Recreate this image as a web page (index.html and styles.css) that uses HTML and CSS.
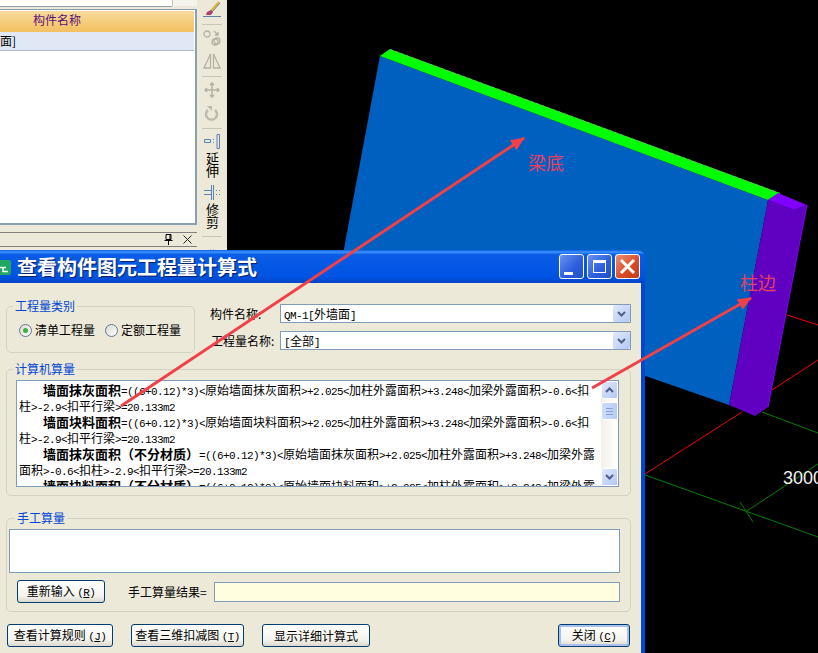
FILE: index.html

```html
<!DOCTYPE html>
<html lang="zh-CN">
<head>
  <meta charset="UTF-8">
  <title>查看构件图元工程量计算式</title>
  <link rel="stylesheet" href="styles.css">
</head>
<body>
<div class="desktop">

  <!-- 3D view behind the windows -->
  <svg class="canvas-layer" width="818" height="653" viewBox="0 0 818 653">
    <g fill="none" stroke-width="1">
      <path stroke="#f00000" d="M645 474 742 412M772 390 818 360M787 315 818 325"/>
      <path stroke="#008000" d="M645 475 818 537M762 412 818 433M747 511 818 464M740 502 753 522"/>
    </g>
    <polygon fill="#0060c0" points="380,56 768,200 729,405 340,270"/>
    <polygon fill="#00ff00" points="380,56 390,49 780,193 768,200"/>
    <path stroke="#80a880" stroke-dasharray="3 3" fill="none" d="M390 49.500 780 193.500"/>
    <polygon fill="#6000c0" points="768,200 794,210 807,205 768,407 755,416 729,405"/>
    <polygon fill="#8000ff" points="768,200 778,193 807,205 794,210"/>
    <path stroke="#8000ff" fill="none" d="M807 205 768 407"/>
    <text class="dim-text" x="783" y="484">3000</text>
  </svg>

  <!-- part list and drawing toolbar -->
  <aside class="side-panel">
    <div class="side-main">
      <div class="side-top">
        <div class="side-input"></div>
        <div class="side-top-btn"></div>
      </div>
      <div class="list-box">
        <div class="list-head">构件名称</div>
        <div class="list-row">面]</div>
      </div>
      <div class="pane-bar">
        <svg width="9" height="11" viewBox="0 0 9 11"><path fill="none" stroke="#000" d="M2 .5h5v5H2zM.5 6.500h8M4.500 6.500V11M6 1v4"/></svg>
        <svg width="9" height="9" viewBox="0 0 9 9"><path fill="none" stroke="#222" d="M.5.5l8 8M8.500.5l-8 8"/></svg>
      </div>
    </div>
    <div class="toolbar">
      <svg class="tool tool-first" width="18" height="16" viewBox="0 0 18 16">
        <path fill="none" stroke="#e0b030" stroke-width="2" d="M16 1 8 10"/>
        <path fill="none" stroke="#5a78b0" d="M17 2 9 11"/>
        <path fill="#b04070" d="M4 11l4-2 2 2-2 3H3z"/>
        <path stroke="#6080a8" d="M0 15.500h18"/>
      </svg>
      <div class="tb-sep"></div>
      <svg class="tool tool-near" width="18" height="16" viewBox="0 0 18 16">
        <g fill="none" stroke="#b4b2a4" stroke-width="1.300">
          <circle cx="4" cy="4" r="3"/><circle cx="12" cy="12" r="3"/><circle cx="14" cy="11" r="3"/>
          <path d="M11 1l4 4M15 2v3h-3"/>
        </g>
      </svg>
      <svg class="tool" width="18" height="16" viewBox="0 0 18 16">
        <path fill="none" stroke="#b4b2a4" stroke-width="1.300" d="M7.500 1v14H1zM10.500 1v14H17z"/>
      </svg>
      <div class="tb-sep"></div>
      <svg class="tool tool-near" width="16" height="16" viewBox="0 0 16 16">
        <path fill="none" stroke="#b4b2a4" stroke-width="1.500" d="M8 1v14M1 8h14M6 3l2-2 2 2M6 13l2 2 2-2M3 6 1 8l2 2M13 6l2 2-2 2"/>
      </svg>
      <svg class="tool" width="14" height="16" viewBox="0 0 14 16">
        <path fill="none" stroke="#bdbbad" stroke-width="2.500" d="M3 5a5.500 5.500 0 1 0 7 0"/>
        <path fill="#bdbbad" d="M2 1h5v5z"/>
      </svg>
      <div class="tb-sep"></div>
      <svg class="tool tool-near" width="16" height="15" viewBox="0 0 16 15">
        <path fill="none" stroke="#5a80b8" d="M.5 5.500h6v3h-6zM13 .5h2.500v14H13zM9 5.500h1M9 8.500h1"/>
      </svg>
      <div class="tool-text">延伸</div>
      <svg class="tool" width="16" height="15" viewBox="0 0 16 15">
        <path fill="none" stroke="#5a80b8" d="M0 5.500h7M0 9.500h7M7.500 0v15M9.500 0v15M12 5.500h1M12 9.500h1M15 5.500h1M15 9.500h1"/>
      </svg>
      <div class="tool-text">修剪</div>
      <div class="tb-sep"></div>
      <svg class="tool" width="16" height="8" viewBox="0 0 16 8">
        <path fill="none" stroke="#7090c0" stroke-width="1.500" d="M7 1 2 4l5 3M9 1l5 3-5 3M2 4h4M10 4h4"/>
      </svg>
    </div>
  </aside>

  <!-- dialog -->
  <section class="dialog">
    <header class="title-bar">
      <svg class="app-icon" width="11" height="15" viewBox="0 0 11 15">
        <rect x="-6" width="17" height="15" rx="2" fill="#20a860"/>
        <path fill="none" stroke="#fff" stroke-width="1.500" d="M0 7.500h6M3 7.500v4h5"/>
      </svg>
      <h1 class="title-text">查看构件图元工程量计算式</h1>
      <div class="win-btns">
        <div class="win-btn"><span class="ico-min"></span></div>
        <div class="win-btn"><span class="ico-max"></span></div>
        <div class="win-btn win-close">
          <svg width="17" height="17" viewBox="0 0 17 17"><path fill="none" stroke="#fff" stroke-width="3" d="M2 2l13 13M15 2 2 15"/></svg>
        </div>
      </div>
    </header>

    <div class="dialog-body">
      <div class="top-row">
        <fieldset class="group type-group">
          <legend>工程量类别</legend>
          <div class="radios">
            <span class="radio-item"><span class="radio radio-on"></span>清单工程量</span>
            <span class="radio-item"><span class="radio"></span>定额工程量</span>
          </div>
        </fieldset>
        <div class="combo-form">
          <span>构件名称:</span>
          <div class="combo"><span class="n">QM-1[</span>外墙面<span class="n">]</span>
            <span class="combo-btn"><svg class="chev"><use href="#chev-down"/></svg></span>
          </div>
          <span class="second-label">工程量名称:</span>
          <div class="combo"><span class="n">[</span>全部<span class="n">]</span>
            <span class="combo-btn"><svg class="chev"><use href="#chev-down"/></svg></span>
          </div>
        </div>
      </div>

      <fieldset class="group calc-group">
        <legend>计算机算量</legend>
        <div class="formula-box">
          <div class="formula-text">
            <div class="line-first"><b>墙面抹灰面积</b><span class="n">=((6+0.12)*3)&lt;</span>原始墙面抹灰面积<span class="n">&gt;+2.025&lt;</span>加柱外露面积<span class="n">&gt;+3.248&lt;</span>加梁外露面积<span class="n">&gt;-0.6&lt;</span>扣</div>
            <div>柱<span class="n">&gt;-2.9&lt;</span>扣平行梁<span class="n">&gt;=20.133m2</span></div>
            <div class="line-first"><b>墙面块料面积</b><span class="n">=((6+0.12)*3)&lt;</span>原始墙面块料面积<span class="n">&gt;+2.025&lt;</span>加柱外露面积<span class="n">&gt;+3.248&lt;</span>加梁外露面积<span class="n">&gt;-0.6&lt;</span>扣</div>
            <div>柱<span class="n">&gt;-2.9&lt;</span>扣平行梁<span class="n">&gt;=20.133m2</span></div>
            <div class="line-first"><b>墙面抹灰面积（不分材质）</b><span class="n">=((6+0.12)*3)&lt;</span>原始墙面抹灰面积<span class="n">&gt;+2.025&lt;</span>加柱外露面积<span class="n">&gt;+3.248&lt;</span>加梁外露</div>
            <div>面积<span class="n">&gt;-0.6&lt;</span>扣柱<span class="n">&gt;-2.9&lt;</span>扣平行梁<span class="n">&gt;=20.133m2</span></div>
            <div class="line-first"><b>墙面块料面积（不分材质）</b><span class="n">=((6+0.12)*3)&lt;</span>原始墙面块料面积<span class="n">&gt;+2.025&lt;</span>加柱外露面积<span class="n">&gt;+3.248&lt;</span>加梁外露</div>
          </div>
          <div class="scrollbar">
            <span class="sb-btn"><svg class="chev"><use href="#chev-up"/></svg></span>
            <span class="sb-thumb"></span>
            <span class="sb-btn sb-down"><svg class="chev"><use href="#chev-down"/></svg></span>
          </div>
        </div>
      </fieldset>

      <fieldset class="group manual-group">
        <legend>手工算量</legend>
        <div class="manual-input"></div>
        <div class="manual-row">
          <button class="xp-btn btn-retype">重新输入 <span class="n">(<u>R</u>)</span></button>
          <span class="result-label">手工算量结果=</span>
          <div class="result-box"></div>
        </div>
      </fieldset>

      <div class="bottom-row">
        <button class="xp-btn btn-rule">查看计算规则 <span class="n">(<u>J</u>)</span></button>
        <button class="xp-btn btn-3d">查看三维扣减图 <span class="n">(<u>T</u>)</span></button>
        <button class="xp-btn btn-detail">显示详细计算式</button>
        <button class="xp-btn btn-close">关闭 <span class="n">(<u>C</u>)</span></button>
      </div>
    </div>
  </section>

  <!-- red notes drawn over the screenshot -->
  <svg class="canvas-layer" width="818" height="653" viewBox="0 0 818 653">
    <defs>
      <marker id="head" markerUnits="userSpaceOnUse" markerWidth="14" markerHeight="12" refX="13" refY="6" orient="auto">
        <path fill="#f04048" d="M0 0 14 6 0 12z"/>
      </marker>
      <symbol id="chev-down" viewBox="0 0 9 6"><path fill="none" stroke="#4d6185" stroke-width="2" d="M1 1l3.500 3.500L8 1"/></symbol>
      <symbol id="chev-up" viewBox="0 0 9 6"><path fill="none" stroke="#4d6185" stroke-width="2" d="M1 5l3.500-3.500L8 5"/></symbol>
    </defs>
    <path fill="none" stroke="#f04048" stroke-width="3" marker-end="url(#head)" d="M121 406 524 138"/>
    <path fill="none" stroke="#f04048" stroke-width="3" marker-end="url(#head)" d="M592 388 751 298"/>
  </svg>
  <span class="note note-beam">梁底</span>
  <span class="note note-col">柱边</span>
</div>
</body>
</html>
```

FILE: styles.css

```css
html, body {
  margin: 0;
  padding: 0;
  background: #000;
}

body {
  font-family: "Noto Sans CJK SC", "Liberation Sans", sans-serif;
  font-size: 12px;
  line-height: 14px;
  color: #000;
}

.desktop {
  position: relative;
  width: 818px;
  height: 653px;
  overflow: hidden;
  background: #000;
}

.canvas-layer {
  position: absolute;
  left: 0;
  top: 0;
  pointer-events: none;
}

.dim-text {
  font-family: "Liberation Sans", sans-serif;
  font-size: 18px;
  fill: #f0f0f0;
}

.n {
  font-family: "Liberation Mono", monospace;
  font-size: 11px;
  letter-spacing: -0.6px;
}

/* side panel */
.side-panel {
  position: absolute;
  left: 0;
  top: 0;
  width: 227px;
  height: 250px;
  display: flex;
  background: #ece9d8;
  overflow: hidden;
}

.side-main {
  width: 197px;
  flex: none;
}

.side-top {
  display: flex;
  height: 8px;
}

.side-input {
  width: 172px;
  height: 6px;
  background: #fff;
  border-bottom: 1px solid #8ca0b4;
}

.side-top-btn {
  width: 24px;
  height: 6px;
  background: #f4f3ec;
  border-left: 1px solid #c8c6b8;
}

.list-box {
  height: 216px;
  background: #fff;
  border: 1px solid #8ca0b4;
  border-width: 1px 2px 2px 0;
  padding-top: 1px;
  box-sizing: border-box;
  margin-top: 1px;
}

.list-head {
  height: 21px;
  line-height: 18px;
  padding-left: 33px;
  margin-right: 1px;
  color: #5b0f7b;
  background: linear-gradient(#f8dc9c, #f2c060);
}

.list-row {
  height: 18px;
  line-height: 18px;
  margin-right: 1px;
  background: #dfe8f4;
  border-bottom: 1px solid #b4b8c0;
}

.pane-bar {
  display: flex;
  justify-content: flex-end;
  align-items: center;
  gap: 10px;
  height: 13px;
  margin-top: 7px;
  padding-right: 5px;
  border-top: 1px solid #808080;
  border-bottom: 1px solid #808080;
}

.toolbar {
  width: 24px;
  margin-left: 3px;
  padding-top: 1px;
  display: flex;
  flex-direction: column;
  align-items: center;
}

.tool {
  flex: none;
  margin-top: 7px;
}

.tool-first {
  margin-top: 0;
}

.tool-near {
  margin-top: 0;
}

.tb-sep {
  flex: none;
  width: 20px;
  height: 1px;
  margin: 7px 0 5px;
  background: #c8c6b6;
}

.tool-text {
  flex: none;
  margin-top: 3px;
  height: 26px;
  font-size: 13px;
  line-height: 14px;
  writing-mode: vertical-rl;
  text-orientation: upright;
}

/* dialog */
.dialog {
  position: absolute;
  left: 0;
  top: 250px;
  width: 645px;
  height: 403px;
  display: flex;
  flex-direction: column;
}

.title-bar {
  flex: none;
  height: 33px;
  display: flex;
  align-items: center;
  border-top-right-radius: 8px;
  background: linear-gradient(#0a5ae8, #3d94ff 6%, #0a5ce6 14%, #0054e3 80%, #0044c8);
}

.app-icon {
  flex: none;
  margin-top: 1px;
}

.title-text {
  margin: 0 0 0 6px;
  font-size: 20px;
  line-height: 24px;
  font-weight: 700;
  color: #fff;
  text-shadow: 1px 1px 1px #0a1f60;
}

.win-btns {
  display: flex;
  gap: 3px;
  margin-left: auto;
  margin-right: 5px;
}

.win-btn {
  width: 23px;
  height: 23px;
  display: flex;
  align-items: center;
  justify-content: center;
  border: 1px solid #fff;
  border-radius: 3px;
  background: linear-gradient(135deg, #6a92ee, #2a5cdc 60%, #2450c8);
}

.win-close {
  background: linear-gradient(135deg, #ea9078, #d84a24 60%, #c03c18);
}

.ico-min {
  width: 9px;
  height: 3px;
  margin: 13px 6px 0 0;
  background: #fff;
}

.ico-max {
  width: 11px;
  height: 9px;
  border: 1px solid #fff;
  border-top-width: 3px;
}

.dialog-body {
  flex: 1;
  background: #ece9d8;
  border-right: 4px solid #0047d6;
  padding: 16px 10px 0 6px;
}

.group {
  margin: 0;
  padding: 0;
  min-width: 0;
  border: 1px solid #d4d2c2;
  border-radius: 5px;
}

.group legend {
  margin-left: 6px;
  padding: 0 2px;
  line-height: 14px;
  color: #0046d5;
}

.top-row {
  display: flex;
  align-items: flex-start;
  gap: 15px;
}

.type-group {
  width: 189px;
  height: 54px;
  box-sizing: border-box;
  flex: none;
}

.radios {
  display: flex;
  gap: 10px;
  padding: 10px 0 0 12px;
}

.radio-item {
  display: flex;
  align-items: center;
  gap: 3px;
}

.radio {
  width: 11px;
  height: 11px;
  border: 1px solid #5c7a98;
  border-radius: 50%;
  background: linear-gradient(135deg, #dcd9cc, #fff);
  display: flex;
  align-items: center;
  justify-content: center;
}

.radio-on::after {
  content: "";
  width: 5px;
  height: 5px;
  border-radius: 50%;
  background: #3cb03c;
}

.combo-form {
  margin-top: 5px;
  width: 421px;
  display: grid;
  grid-template-columns: 70px 351px;
  row-gap: 8px;
  align-items: center;
}

.second-label {
  margin-left: 1px;
}

.combo {
  position: relative;
  height: 19px;
  line-height: 18px;
  box-sizing: border-box;
  padding-left: 3px;
  background: #fff;
  border: 1px solid #7f9db9;
}

.combo-btn {
  position: absolute;
  right: 0;
  top: 0;
  width: 17px;
  height: 17px;
  display: flex;
  align-items: center;
  justify-content: center;
  border-radius: 2px;
  background: linear-gradient(135deg, #e0e8fc, #b4c8f4);
}

.chev {
  width: 9px;
  height: 6px;
}

.calc-group {
  margin-top: 9px;
  height: 134px;
  box-sizing: border-box;
}

.formula-box {
  width: 603px;
  height: 107px;
  margin: 4px 0 0 9px;
  box-sizing: border-box;
  display: flex;
  background: #fff;
  border: 1px solid #7f9db9;
  overflow: hidden;
}

.formula-text {
  flex: 1;
  min-width: 0;
  padding: 1px 0 0 2px;
  white-space: nowrap;
  overflow: hidden;
}

.formula-text div {
  height: 16px;
  line-height: 16px;
}

.formula-text b {
  font-size: 13px;
}

.line-first {
  padding-left: 24px;
}

.scrollbar {
  flex: none;
  width: 17px;
  display: flex;
  flex-direction: column;
  gap: 3px;
  background: linear-gradient(90deg, #f3f1e8, #fff);
}

.sb-btn {
  flex: none;
  height: 18px;
  display: flex;
  align-items: center;
  justify-content: center;
  border: 1px solid #fff;
  box-sizing: border-box;
  border-radius: 2px;
  background: linear-gradient(135deg, #e0e8fc, #b4c8f4);
}

.sb-down {
  margin-top: auto;
}

.sb-thumb {
  flex: none;
  height: 18px;
  box-sizing: border-box;
  border: 1px solid #fff;
  border-radius: 2px;
  background:
    linear-gradient(#8aa0d8, #8aa0d8) center 5px / 7px 1px no-repeat,
    linear-gradient(#8aa0d8, #8aa0d8) center 8px / 7px 1px no-repeat,
    linear-gradient(#8aa0d8, #8aa0d8) center 11px / 7px 1px no-repeat,
    linear-gradient(90deg, #cfdcfa, #b8ccf6);
}

.manual-group {
  margin-top: 15px;
  height: 101px;
  box-sizing: border-box;
  padding: 0 10px 0 2px;
}

.manual-input {
  height: 44px;
  margin-top: 4px;
  box-sizing: border-box;
  background: #fff;
  border: 1px solid #7f9db9;
}

.manual-row {
  display: flex;
  align-items: center;
  margin-top: 7px;
  padding-left: 8px;
}

.result-label {
  margin-left: 23px;
  width: 86px;
}

.result-box {
  flex: 1;
  height: 20px;
  box-sizing: border-box;
  background: #ffffe0;
  border: 1px solid #7f9db9;
}

.bottom-row {
  display: flex;
  gap: 18px;
  margin-top: 12px;
  padding: 0 1px;
}

.xp-btn {
  height: 23px;
  padding: 0;
  font: inherit;
  color: #000;
  border: 1px solid #003c74;
  border-radius: 3px;
  background: linear-gradient(#fff, #f4f3ee 70%, #dcd8cc);
}

.btn-retype { width: 88px; }
.btn-rule { width: 106px; }
.btn-3d { width: 113px; }
.btn-detail { width: 108px; }

.btn-close {
  width: 72px;
  margin-left: auto;
  box-shadow: inset 0 0 0 2px #a8c0ec;
}

/* notes */
.note {
  position: absolute;
  font-size: 18px;
  line-height: 20px;
  color: #e84060;
}

.note-beam {
  left: 528px;
  top: 152px;
}

.note-col {
  left: 740px;
  top: 272px;
}
```
